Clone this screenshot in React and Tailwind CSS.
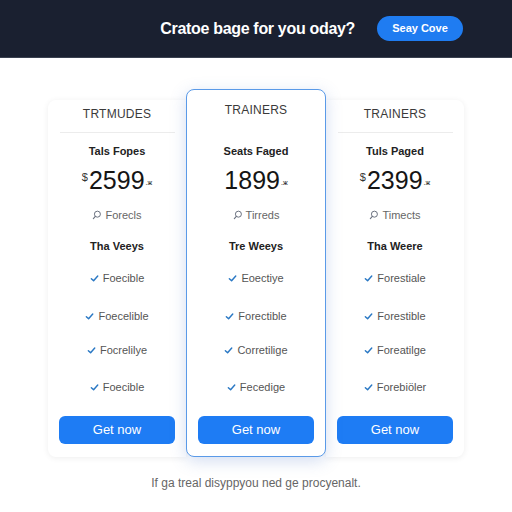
import React from "react";

const Check = () => (
  <svg width="9" height="9" viewBox="0 0 10 10" className="shrink-0">
    <path d="M1.5 5.2 L4 7.6 L8.6 2.2" fill="none" stroke="#2a78c4" strokeWidth="1.6" strokeLinecap="round" strokeLinejoin="round" />
  </svg>
);

const TagIcon = () => (
  <svg width="10" height="10" viewBox="0 0 12 12" className="shrink-0">
    <circle cx="6.5" cy="5" r="3.6" fill="none" stroke="#6b7280" strokeWidth="1.2" />
    <path d="M4 7.6 L1.6 10.4" stroke="#6b7280" strokeWidth="1.3" strokeLinecap="round" />
  </svg>
);

function Card({ title, heading, price, cur, icontext, bold, features, variant }) {
  const mid = variant === "mid";
  const base =
    "flex flex-col items-center bg-white " +
    (mid
      ? "w-[140px] h-[368px] rounded-lg border-[1.5px] border-[#5a9ae8] shadow-[0_4px_16px_rgba(80,120,200,0.25)] z-10 pt-[12px]"
      : variant === "left"
      ? "w-[138px] h-[357px] rounded-l-lg shadow-[0_1px_6px_rgba(0,0,0,0.07)] pt-[6px]"
      : "w-[138px] h-[357px] rounded-r-lg shadow-[0_1px_6px_rgba(0,0,0,0.07)] pt-[6px]");
  const fmt = [16, 22, 18, 21];
  return (
    <div className={base}>
      <div className="h-[16px] leading-[16px] text-[12px] text-[#3a3a3a] tracking-[0.02em]">{title}</div>
      {mid ? (
        <div className="h-[25px]" />
      ) : (
        <>
          <div className="mt-[10px] h-px w-[115px] bg-[#ececec]" />
          <div className="h-[10px]" />
        </>
      )}
      <div className="h-[16px] leading-[16px] text-[11px] font-bold text-[#222]">{heading}</div>
      <div className="mt-[6px] h-[30px] flex items-center text-[#111]">
        {cur && <span className="text-[11px] self-start mt-[4px] mr-[1px] text-[#333]">$</span>}
        <span className="text-[25px] leading-[30px] font-normal text-[#151515]">{price}</span>
        <span className="text-[7px] self-end mb-[7px] ml-[1px]">.ж</span>
      </div>
      <div className="mt-[12px] h-[16px] flex items-center gap-[3px] text-[11px] text-[#666]">
        <TagIcon />
        <span>{icontext}</span>
      </div>
      <div className="mt-[15px] h-[16px] leading-[16px] text-[11px] font-bold text-[#222]">{bold}</div>
      {features.map((f, i) => (
        <div key={i} style={{ marginTop: fmt[i] }} className="h-[16px] flex items-center gap-[4px] text-[11px] text-[#555]">
          <Check />
          <span>{f}</span>
        </div>
      ))}
      <button className="mt-[21px] h-[28px] w-[116px] rounded-md bg-[#1e7cf4] text-white text-[13px]">
        Get now
      </button>
    </div>
  );
}

export default function App() {
  return (
    <div className="w-[512px] h-[512px] bg-white overflow-hidden" style={{ fontFamily: '"Liberation Sans", Arial, sans-serif' }}>
      <div className="h-[58px] bg-[#1a2030] border-b border-[#3a4150] flex items-center justify-end pr-[49px] gap-[22px]">
        <div className="text-white font-bold text-[16px] tracking-[-0.02em]">Cratoe bage for you oday?</div>
        <button className="h-[25px] w-[86px] rounded-full bg-[#1f7cf1] text-white text-[11px] font-bold">Seay Cove</button>
      </div>
      <div className="pt-[31px] flex justify-center items-end">
        <Card
          variant="left"
          title="TRTMUDES"
          heading="Tals Fopes"
          price="2599"
          cur
          icontext="Forecls"
          bold="Tha Veeys"
          features={["Foecible", "Foecelible", "Focrelilye", "Foecible"]}
        />
        <Card
          variant="mid"
          title="TRAINERS"
          heading="Seats Faged"
          price="1899"
          icontext="Tirreds"
          bold="Tre Weeys"
          features={["Eoectiye", "Forectible", "Corretilige", "Fecedige"]}
        />
        <Card
          variant="right"
          title="TRAINERS"
          heading="Tuls Paged"
          price="2399"
          cur
          icontext="Timects"
          bold="Tha Weere"
          features={["Forestiale", "Forestible", "Foreatilge", "Forebiöler"]}
        />
      </div>
      <div className="mt-[17px] text-center text-[12px] text-[#666]">If ga treal disyppyou ned ge procyenalt.</div>
    </div>
  );
}
